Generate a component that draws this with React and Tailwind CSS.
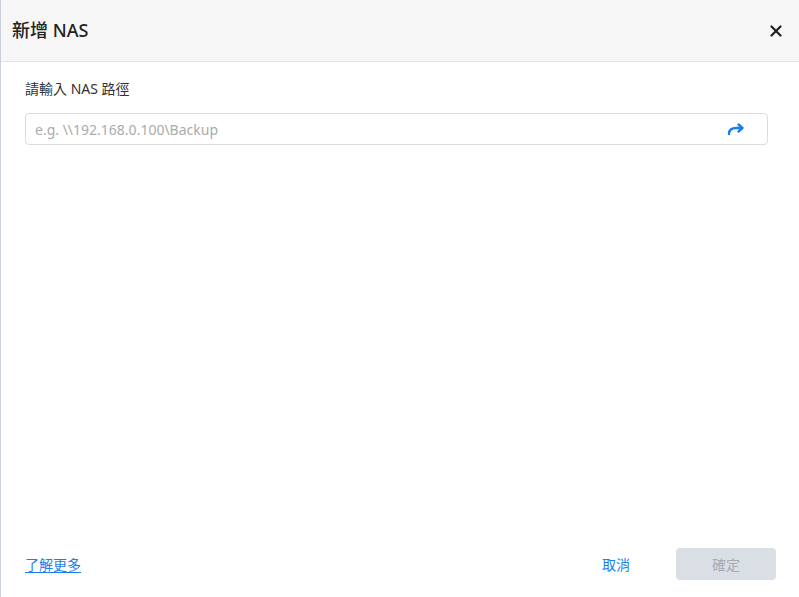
import { X } from "lucide-react";

function ForwardArrow() {
  return (
    <svg width="18" height="14" viewBox="0 0 18 14" fill="none">
      <path
        d="M2 12 C2 7.5 5 6 9 6 H15"
        stroke="#1a7ff0"
        strokeWidth="2.4"
        strokeLinecap="round"
      />
      <path
        d="M11.5 2.5 L15.5 6 L11.5 9.5"
        stroke="#1a7ff0"
        strokeWidth="2.4"
        strokeLinecap="round"
        strokeLinejoin="round"
      />
    </svg>
  );
}

export default function App() {
  return (
    <div
      className="h-screen w-full flex flex-col bg-white border-l border-[#c9d0dc] text-[#333]"
      style={{ fontFamily: '"Noto Sans", "Noto Sans CJK TC", sans-serif' }}
    >
      <div className="h-[62px] shrink-0 flex items-center justify-between pl-[11px] pr-[14px] bg-[#f7f7f7] border-b border-[#e3e3e3]">
        <h1 className="text-[18px] font-medium text-[#222]">新增 NAS</h1>
        <button className="text-[#222]">
          <X size={18} strokeWidth={3} />
        </button>
      </div>

      <div className="flex-1 pl-[24px] pr-[31px] pt-[16px]">
        <label className="block text-[14px] text-[#333] mb-[14px]">請輸入 NAS 路徑</label>
        <div className="h-[32px] flex items-center border border-[#dcdcdc] rounded-[4px] pl-[9px] pr-[22px]">
          <input
            className="flex-1 outline-none text-[14px] placeholder:text-[#ababab] bg-transparent"
            placeholder="e.g. \\192.168.0.100\Backup"
          />
          <ForwardArrow />
        </div>
      </div>

      <div className="h-[64px] shrink-0 flex items-center justify-between pl-[24px] pr-[23px] pb-[2px]">
        <a href="#" className="text-[14px] text-[#1a7ff0] underline underline-offset-2">
          了解更多
        </a>
        <div className="flex items-center gap-[46px]">
          <button className="text-[14px] text-[#1a7ff0]">取消</button>
          <button className="w-[100px] h-[32px] rounded-[4px] bg-[#dadee5] text-[14px] text-[#a6aab2]">
            確定
          </button>
        </div>
      </div>
    </div>
  );
}
